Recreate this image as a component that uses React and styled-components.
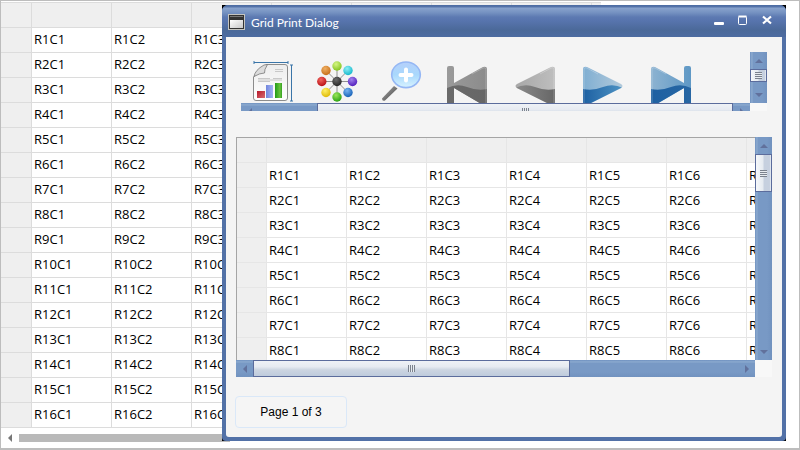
import React from "react";
import styled, { createGlobalStyle } from "styled-components";

const Global = createGlobalStyle`
  * { box-sizing: border-box; }
  body { margin: 0; background: #fff; font-family: "Open Sans", "Noto Sans", sans-serif; }
  button { font: inherit; padding: 0; border: 0; background: none; }
`;

const Page = styled.main`
  position: relative;
  min-height: 100vh;
  border: 1px solid #bdbdbd;
  border-width: 1px 1px 2px 1px;
  padding-top: 1px;
  background: #fff;
  overflow: hidden;
`;

const BackgroundArea = styled.div`
  width: 600px;
  max-width: 100%;
  overflow: hidden;
`;

const GridTable = styled.table`
  border-collapse: separate;
  border-spacing: 0;
  table-layout: fixed;
  width: ${(p) => p.$columns * 80 + p.$headerWidth}px;
  font-size: 13px;
  line-height: 22px;
  color: #000;

  th, td {
    height: 25px;
    padding: 0 0 ${(p) => p.$padBottom}px 2px;
    border: 0 solid ${(p) => p.$line};
    border-width: 1px 0 0 1px;
    text-align: left;
    font-weight: 400;
    white-space: nowrap;
  }
  th { background: #efefef; }
  th:first-child { border-left-width: 0; width: ${(p) => p.$headerWidth}px; }
  tbody tr:last-child > * { border-bottom-width: ${(p) => (p.$closed ? 1 : 0)}px; }
`;

const PlainScroll = styled.div`
  display: flex;
  align-items: center;
  width: 229px;
  height: 18px;
  margin-top: 1px;
`;

const PlainArrow = styled.button`
  width: 18px;
  height: 18px;
  display: grid;
  place-items: center;
`;

const PlainThumb = styled.div`
  flex: 1;
  height: 8px;
  background: #b9b9b9;
`;

const DialogShadow = styled.div`
  position: absolute;
  inset: 4px 13px 7px 221px;
  background: #000;
  display: flex;
`;

const Dialog = styled.section`
  flex: 1;
  min-width: 0;
  display: flex;
  flex-direction: column;
  background: #5271a7;
  border-radius: 6px 6px 4px 4px;
  overflow: hidden;
`;

const TitleBar = styled.header`
  display: flex;
  align-items: center;
  height: 32px;
  flex: none;
  padding: 2px 7px 0 6px;
  color: #fff;
  background: linear-gradient(#4b6ba2 0, #5775ab 2px, #89a3cd 3px, #7390c0 8px, #5d7ab2 12px, #5774ad 16px, #4b6999 25px, #4d6ca1 32px);
`;

const Title = styled.h1`
  flex: 1;
  margin: 0 0 0 6px;
  padding-top: 2px;
  font-size: 12px;
  line-height: 20px;
  font-weight: 400;
  font-family: Lato, "Open Sans", sans-serif;
`;

const WindowButton = styled.button`
  width: 24px;
  height: 24px;
  padding-bottom: 4px;
  display: grid;
  place-items: center;
`;

const Body = styled.div`
  flex: 1;
  min-height: 0;
  display: flex;
  flex-direction: column;
  align-items: stretch;
  margin: 0 4px 4px;
  padding: 15px 10px 9px;
  background: #f4f4f4;
  border-radius: 0 0 3px 3px;
`;

const ScrollFrame = styled.div`
  display: grid;
  grid-template-columns: minmax(0, 1fr) 17px;
  grid-template-rows: minmax(0, 1fr) 17px;
  min-height: 0;
  background: #f8f8f8;
`;

const ToolbarClip = styled.div`
  flex: none;
  height: 59px;
  margin: 0 5px 26px;
  overflow: hidden;
`;

const ToolbarFrame = styled(ScrollFrame)`
  grid-template-rows: 51px 17px;
`;

const Tools = styled.div`
  display: flex;
  align-items: flex-start;
  gap: ${(p) => p.$gap}px;
  padding: ${(p) => p.$top}px 0 0 ${(p) => p.$left}px;
`;

const ToolView = styled.div`
  display: flex;
  overflow: hidden;
  background: #f4f4f4;
`;

const ToolButton = styled.button`
  flex: none;
  line-height: 0;
`;

const PreviewFrame = styled(ScrollFrame)`
  flex: 1;
`;

const PreviewView = styled.div`
  overflow: hidden;
  background: #fff;
  border-left: 1px solid #a5a5a5;
  border-top: 1px solid #a5a5a5;

  thead th { border-top-width: 0; height: 24px; }
`;

const Bar = styled.div`
  display: flex;
  flex-direction: ${(p) => (p.$vertical ? "column" : "row")};
  min-width: 0;
  min-height: 0;
  background: linear-gradient(${(p) => (p.$vertical ? "to right" : "to bottom")}, #6f91c0 0, #8eacd0 2px, #7899c5 3px, #7899c5 12px, #7192bf 100%);
`;

const Arrow = styled.button`
  flex: none;
  width: 17px;
  height: 17px;
  display: grid;
  place-items: center;
`;

const Space = styled.div`
  flex: ${(p) => p.$grow} 1 0;
`;

const Thumb = styled.div`
  flex: ${(p) => p.$grow} 1 0;
  display: flex;
  align-items: center;
  justify-content: center;
  box-shadow: inset 0 0 0 1px #5b6c9c;
  background: ${(p) =>
    p.$vertical
      ? "linear-gradient(to right, #f8fafc 0, #e6ebf1 45%, #c6d0df 55%, #c6d0df 85%, #eef2f7 95%)"
      : "linear-gradient(to bottom, #f0f3f7 0, #e6eaf1 40%, #ccd5e1 58%, #bcc9dc 100%)"};
`;

const Grip = styled.div`
  width: 7px;
  height: 7px;
  background: repeating-linear-gradient(${(p) => (p.$vertical ? "to bottom" : "to right")}, #7b828e 0 1px, #e8ecf0 1px 2px);
`;

const PageButton = styled.button`
  align-self: flex-start;
  flex: none;
  width: 112px;
  height: 32px;
  margin: 19px 0 0 -1px;
  border: 1px solid #dae8f8;
  border-radius: 4px;
  background: #f5f5f5;
  color: #000;
  && { font-family: "Liberation Sans", Arial, sans-serif; font-size: 12px; }
`;

const arrowPaths = {
  up: "M0 6 4 2l4 4z",
  down: "M0 2h8L4 6z",
  left: "M6 0v8L2 4z",
  right: "M2 0v8l4-4z",
};

function ArrowIcon({ dir, color = "#61719c" }) {
  return (
    <svg width="8" height="8" viewBox="0 0 8 8" aria-hidden="true">
      <path d={arrowPaths[dir]} fill={color} />
    </svg>
  );
}

function ScrollBar({ vertical, before, thumb, after }) {
  return (
    <Bar $vertical={vertical}>
      <Arrow aria-label={vertical ? "Scroll up" : "Scroll left"}>
        <ArrowIcon dir={vertical ? "up" : "left"} />
      </Arrow>
      <Space $grow={before} />
      <Thumb $vertical={vertical} $grow={thumb}>
        <Grip $vertical={vertical} />
      </Thumb>
      <Space $grow={after} />
      <Arrow aria-label={vertical ? "Scroll down" : "Scroll right"}>
        <ArrowIcon dir={vertical ? "down" : "right"} />
      </Arrow>
    </Bar>
  );
}

function DataGrid({ rows, columns, filled = columns, line, closed, headerWidth, padBottom = 0 }) {
  const cols = Array.from({ length: columns }, (_, i) => i + 1);
  return (
    <GridTable $columns={columns} $line={line} $closed={closed} $headerWidth={headerWidth} $padBottom={padBottom}>
      <thead>
        <tr>
          <th />
          {cols.map((c) => <th key={c} />)}
        </tr>
      </thead>
      <tbody>
        {Array.from({ length: rows }, (_, i) => i + 1).map((r) => (
          <tr key={r}>
            <th />
            {cols.map((c) => <td key={c}>{c <= filled ? `R${r}C${c}` : null}</td>)}
          </tr>
        ))}
      </tbody>
    </GridTable>
  );
}

function ReportIcon() {
  return (
    <svg width="41" height="42" viewBox="0 0 41 42" aria-hidden="true">
      <defs>
        <linearGradient id="paper" x2="0" y2="1"><stop stopColor="#ededed" /><stop offset="1" stopColor="#fff" /></linearGradient>
        <linearGradient id="barRed" x2="1" y2="1"><stop stopColor="#b9192a" /><stop offset="1" stopColor="#d56b72" /></linearGradient>
        <linearGradient id="barBlue" x2="1"><stop stopColor="#7186dc" /><stop offset="1" stopColor="#a5b4f5" /></linearGradient>
        <linearGradient id="barGreen" x2="1"><stop stopColor="#239b18" /><stop offset=".7" stopColor="#67c33d" /><stop offset="1" stopColor="#35a022" /></linearGradient>
      </defs>
      <path d="M2 1.500H36M2 0v3M36 0v3M39.500 4v36M38 4h3M38 40h3" stroke="#3a75a8" fill="none" />
      <path d="M14 3.500H33q2.500 0 2.500 2.500V37q0 2.500-2.500 2.500H4Q1.500 39.500 1.500 37V16z" fill="url(#paper)" stroke="#8c8c8c" />
      <path d="M2 15.500Q3 9 12 4l3.500-.5Q12 9 12.500 12 8 12 2 15.500z" fill="#dcdcdc" stroke="#777" strokeWidth=".8" />
      <path d="M23 8.500h8M23 10.500h8M6 17.500h12M6 20.500h12M21 17.500h9M6 19h24" stroke="#c8c8c8" />
      <path d="M5 30h8v7H5z" fill="url(#barRed)" />
      <path d="M14 24h7v13h-7z" fill="url(#barBlue)" />
      <path d="M23 22h7v15h-7z" fill="url(#barGreen)" />
    </svg>
  );
}

const nodes = [
  [20, 5, "#d5f583", "#85c421"],
  [31, 9.500, "#8eedf5", "#16b9cc"],
  [35.500, 20.500, "#a081ed", "#5420bd"],
  [31, 31.500, "#77b3f2", "#1762b8"],
  [20, 36, "#9de65b", "#2ba414"],
  [9, 31.500, "#fff067", "#dfba08"],
  [4.800, 20.500, "#f0645d", "#bb1017"],
  [9, 9.500, "#efaf63", "#c7701a"],
  [20, 20.500, "#6b6b6b", "#272727"],
];

function ColorsIcon() {
  return (
    <svg width="41" height="41" viewBox="0 0 41 41" aria-hidden="true">
      <path d="M20 5v31M5 20.500h31M9 9.500l22 22M31 9.500l-22 22" stroke="#909090" />
      {nodes.map(([x, y, light, dark], i) => (
        <React.Fragment key={i}>
          <radialGradient id={`node${i}`} cx=".4" cy=".3" r=".7"><stop stopColor={light} /><stop offset="1" stopColor={dark} /></radialGradient>
          <circle cx={x} cy={y} r="4.700" fill={`url(#node${i})`} />
        </React.Fragment>
      ))}
    </svg>
  );
}

function ZoomIcon() {
  return (
    <svg width="41" height="41" viewBox="0 0 41 41" aria-hidden="true">
      <defs>
        <linearGradient id="lens" x2="0" y2="1"><stop stopColor="#b5d0fb" /><stop offset=".5" stopColor="#a8d8fc" /><stop offset="1" stopColor="#d8f3ff" /></linearGradient>
        <linearGradient id="handle" x2="1" y2="1"><stop stopColor="#aaa" /><stop offset=".5" stopColor="#777" /><stop offset="1" stopColor="#333" /></linearGradient>
      </defs>
      <path d="M12 25 15.500 27.500 3 39.500q-3 1-3-2z" fill="url(#handle)" />
      <ellipse cx="24" cy="13.800" rx="14.300" ry="12.800" fill="url(#lens)" stroke="#95b7f4" strokeWidth="1.600" />
      <path d="M24 8.500v11M18.500 14h11" stroke="#fff" strokeWidth="4" strokeLinecap="round" />
    </svg>
  );
}

function MediaIcon({ id, blue, flip, bar, pale }) {
  const top = blue ? (pale ? ["#7faed2", "#b3cadb"] : ["#8db3d1", "#5f98c5"]) : pale ? ["#bebebe", "#a7a7a7"] : ["#8b8b8b", "#9a9a9a"];
  const low = blue ? ["#1d60a2", pale ? "#4f94c4" : "#2766a3"] : ["#666", pale ? "#8b8b8b" : "#6a6a6a"];
  return (
    <svg width="40" height="40" viewBox="0 0 40 40" aria-hidden="true">
      <defs>
        <linearGradient id={`${id}t`} x2="1" y2="0"><stop stopColor={top[0]} /><stop offset="1" stopColor={top[1]} /></linearGradient>
        <linearGradient id={`${id}b`} x2="1" y2="0"><stop stopColor={low[0]} /><stop offset="1" stopColor={low[1]} /></linearGradient>
        <clipPath id={`${id}c`}>
          <path d={bar ? "M0 3Q0 0 4 1L33 17V2q0-2 2-2h3q2 0 2 2v38H33V22L4 39q-4 1-4-2z" : "M0 3Q0 0 4 1L38 18q3 2 0 4L4 39q-4 1-4-2z"} />
        </clipPath>
      </defs>
      <g transform={flip ? "matrix(-1 0 0 1 40 0)" : undefined}>
        <g clipPath={`url(#${id}c)`}>
          <path d="M0 0h40v40H0z" fill={`url(#${id}t)`} />
          <path d="M0 23Q10 25 20 21T40 22V40H0z" fill={`url(#${id}b)`} />
          <path d="M1 38V3Q1 1 4 2L15 8" fill="none" stroke="#fff" strokeOpacity=".25" />
        </g>
      </g>
    </svg>
  );
}

function WindowIcon() {
  return (
    <svg width="17" height="16" viewBox="0 0 17 16" aria-hidden="true">
      <defs><linearGradient id="win" x2="1" y2="1"><stop stopColor="#fff" /><stop offset="1" stopColor="#c8c8c8" /></linearGradient></defs>
      <path d="M0 0h17v16H0z" fill="#c4c4c0" />
      <path d="M1 1h15v14H1z" fill="#333" />
      <path d="M2 6h13v8H2z" fill="url(#win)" />
      <path d="M2 2.500h13" stroke="#777" />
    </svg>
  );
}

export default function App() {
  return (
    <Page>
      <Global />
      <BackgroundArea>
        <DataGrid rows={16} columns={8} filled={3} headerWidth={30} padBottom={2} line="#dcdcdc" closed />
      </BackgroundArea>
      <PlainScroll>
        <PlainArrow aria-label="Scroll left"><ArrowIcon dir="left" color="#777" /></PlainArrow>
        <PlainThumb />
      </PlainScroll>

      <DialogShadow>
        <Dialog role="dialog" aria-labelledby="dialog-title">
          <TitleBar>
            <WindowIcon />
            <Title id="dialog-title">Grid Print Dialog</Title>
            <WindowButton aria-label="Minimize">
              <svg width="12" height="12" viewBox="0 0 12 12"><rect x="1" y="8" width="10" height="3" rx="1" fill="#fff" /></svg>
            </WindowButton>
            <WindowButton aria-label="Maximize">
              <svg width="12" height="12" viewBox="0 0 12 12"><rect x="1.500" y="2.500" width="8" height="8" rx="1" fill="none" stroke="#fff" /><path d="M1.500 2.500h8" stroke="#fff" strokeWidth="2" /></svg>
            </WindowButton>
            <WindowButton aria-label="Close">
              <svg width="12" height="12" viewBox="0 0 12 12"><path d="m2 2.500 8 7M10 2.500l-8 7" stroke="#fff" strokeWidth="2.200" /></svg>
            </WindowButton>
          </TitleBar>
          <Body>
            <ToolbarClip>
              <ToolbarFrame>
                <ToolView>
                  <Tools $gap={24} $top={9} $left={11}>
                    <ToolButton aria-label="Page setup"><ReportIcon /></ToolButton>
                    <ToolButton aria-label="Colors"><ColorsIcon /></ToolButton>
                    <ToolButton aria-label="Zoom"><ZoomIcon /></ToolButton>
                  </Tools>
                  <Tools $gap={28} $top={14} $left={24}>
                    <ToolButton aria-label="First page"><MediaIcon id="first" flip bar /></ToolButton>
                    <ToolButton aria-label="Previous page"><MediaIcon id="prev" flip pale /></ToolButton>
                    <ToolButton aria-label="Next page"><MediaIcon id="next" blue pale /></ToolButton>
                    <ToolButton aria-label="Last page"><MediaIcon id="last" blue bar /></ToolButton>
                  </Tools>
                </ToolView>
                <ScrollBar vertical before={0} thumb={13} after={4} />
                <ScrollBar before={59} thumb={416} after={0} />
              </ToolbarFrame>
            </ToolbarClip>
            <PreviewFrame>
              <PreviewView>
                <DataGrid rows={8} columns={7} headerWidth={29} line="#e6e6e6" />
              </PreviewView>
              <ScrollBar vertical before={0} thumb={38} after={151} />
              <ScrollBar before={0} thumb={317} after={168} />
            </PreviewFrame>
            <PageButton>Page 1 of 3</PageButton>
          </Body>
        </Dialog>
      </DialogShadow>
    </Page>
  );
}
